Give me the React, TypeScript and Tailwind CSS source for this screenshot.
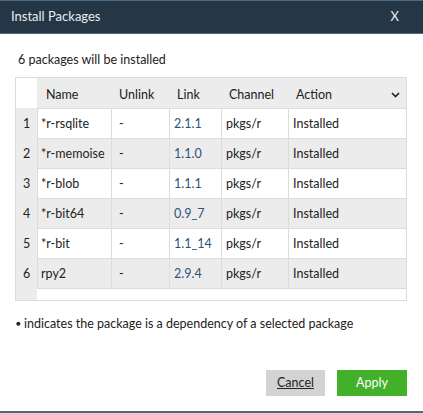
import React from "react";

const rows = [
  { name: "*r-rsqlite", link: "2.1.1" },
  { name: "*r-memoise", link: "1.1.0" },
  { name: "*r-blob", link: "1.1.1" },
  { name: "*r-bit64", link: "0.9_7" },
  { name: "*r-bit", link: "1.1_14" },
  { name: "rpy2", link: "2.9.4" },
];

const cols = "grid grid-cols-[21px_74px_58px_52px_67px_1fr]";

const App = () => {
  return (
    <div
      className="flex h-[413px] w-[423px] flex-col bg-white text-[12.5px] text-[#222]"
      style={{ fontFamily: "Lato, 'Open Sans', sans-serif" }}
    >
      {/* Title bar */}
      <div className="flex h-[34px] items-center justify-between border-t border-b border-[#4d6b80] bg-[#253646] pl-[11px] pr-[24px] text-[13px] text-[#e8eef2]">
        <span>Install Packages</span>
        <span className="text-[13px]">X</span>
      </div>

      <div className="flex-1 px-[15px] pr-[16px]">
        <p className="mt-[18px] mb-[9px] pl-[3px] leading-[16px]">6 packages will be installed</p>

        {/* Table */}
        <div className="h-[224px] border border-[#dcdcdc] bg-white">
          <div className={`${cols} h-[30px] items-center`}>
            <div className="h-full bg-white" />
            <div className="flex h-full items-center bg-[#ececec] pl-[9px] pt-[4px]">Name</div>
            <div className="flex h-full items-center bg-[#ececec] pl-[8px] pt-[4px]">Unlink</div>
            <div className="flex h-full items-center bg-[#ececec] pl-[8px] pt-[4px]">Link</div>
            <div className="flex h-full items-center bg-[#ececec] pl-[8px] pt-[4px]">Channel</div>
            <div className="flex h-full items-center justify-between bg-[#ececec] pl-[8px] pr-[6px] pt-[4px]">
              <span>Action</span>
              <svg width="9" height="6" viewBox="0 0 9 6">
                <path d="M1 1l3.5 3.5L8 1" stroke="#222" strokeWidth="1.6" fill="none" />
              </svg>
            </div>
          </div>
          {rows.map((r, i) => {
            const bg = i % 2 === 1 ? "bg-[#ececec]" : "bg-white";
            const cell = `flex h-full items-center border-t border-l border-[#dcdcdc] pt-[1px] ${bg}`;
            return (
              <div key={r.name} className={`${cols} h-[30px]`}>
                <div className="flex h-full items-center justify-center bg-[#ececec] pt-[3px]">{i + 1}</div>
                <div className={`${cell} pl-[3px]`}>{r.name}</div>
                <div className={`${cell} pl-[7px]`}>-</div>
                <div className={`${cell} pl-[4px] text-[#2d5378]`}>{r.link}</div>
                <div className={`${cell} pl-[4px]`}>pkgs/r</div>
                <div className={`${cell} pl-[4px]`}>Installed</div>
              </div>
            );
          })}
          <div className="grid h-[12px] grid-cols-[21px_1fr]">
            <div className="bg-[#ececec]" />
            <div className="border-t border-[#dcdcdc]" />
          </div>
        </div>

        <p className="mt-[14px] pl-[1px] leading-[16px]">
          <span className="text-[8px] align-[2px]">●</span> indicates the package is a dependency of a selected package
        </p>

        <div className="mt-[38px] flex justify-end gap-[12px]">
          <button className="h-[26px] w-[59px] bg-[#d3d3d3] text-[12.5px] text-[#222] underline">Cancel</button>
          <button className="h-[26px] w-[70px] bg-[#43b02a] text-[12.5px] text-white">Apply</button>
        </div>
      </div>

      <div className="h-[2px] bg-[#4d6b80]" />
    </div>
  );
};

export default App;
